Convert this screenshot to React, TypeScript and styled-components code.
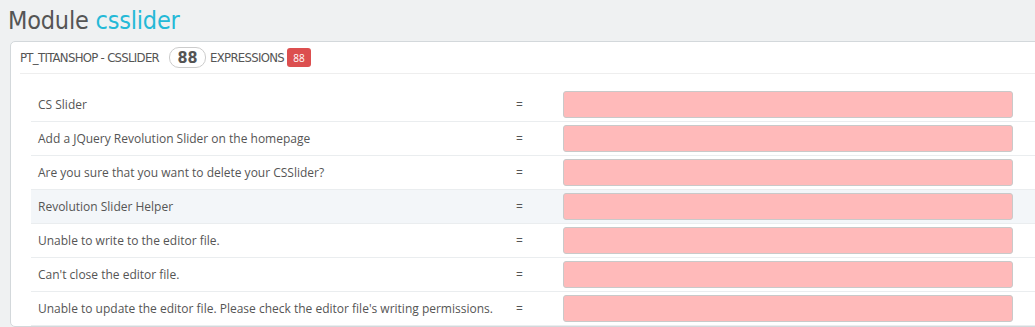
import React from "react";
import styled, { createGlobalStyle } from "styled-components";

const GlobalStyle = createGlobalStyle`
  html, body {
    margin: 0;
    padding: 0;
    background: #eff1f2;
    overflow: hidden;
  }
  body {
    font-family: "Open Sans", "Liberation Sans", sans-serif;
    color: #555;
  }
`;

const condensed = `"Liberation Sans Narrow", "DejaVu Sans Condensed", "Open Sans", sans-serif`;

const Page = styled.div`
  width: 1100px;
  padding: 7px 0 0 8px;
`;

const Title = styled.h2`
  margin: 0 0 6px 0;
  font-family: ${condensed};
  font-weight: normal;
  font-size: 25px;
  letter-spacing: -0.2px;
  line-height: 28px;
  color: #555;
`;

const ModuleName = styled.span`
  color: #25b9d7;
`;

const Panel = styled.div`
  margin-left: 2px;
  background: #fff;
  border: 1px solid #d3d8db;
  border-radius: 5px;
  padding: 0 0 0 9px;
`;

const PanelHeading = styled.div`
  display: flex;
  align-items: center;
  height: 31px;
  border-bottom: 1px solid #eee;
  font-family: ${condensed};
  font-size: 13px;
  letter-spacing: -0.7px;
  text-transform: uppercase;
  color: #555;
`;

const CountPill = styled.span`
  display: inline-flex;
  align-items: center;
  justify-content: center;
  width: 35px;
  height: 19px;
  margin: 0 4px 0 10px;
  border: 1px solid #ccc;
  border-radius: 10px;
  font-size: 16px;
  letter-spacing: 0;
  font-weight: bold;
  color: #555;
`;

const RedBadge = styled.span`
  display: inline-flex;
  align-items: center;
  justify-content: center;
  width: 24px;
  height: 19px;
  margin-left: 3px;
  border-radius: 3px;
  background: #dc4f4f;
  color: #fff;
  font-family: "Open Sans", sans-serif;
  font-size: 10px;
  letter-spacing: 0;
`;

const Table = styled.div`
  margin: 14px 0 0 11px;
`;

const Row = styled.div<{ $hover?: boolean }>`
  display: flex;
  align-items: center;
  height: 33px;
  border-bottom: 1px solid #eaedef;
  background: ${(p) => (p.$hover ? "#f3f6f9" : "#fff")};
  font-size: 12px;
`;

const Label = styled.div`
  width: 478px;
  padding-left: 7px;
`;

const Eq = styled.div`
  width: 40px;
`;

const Cell = styled.div`
  padding: 0 7px;
`;

const Field = styled.div`
  width: 448px;
  height: 25px;
  background: #ffbaba;
  border: 1px solid #c9c9c9;
  border-radius: 3px;
`;

const rows = [
  "CS Slider",
  "Add a JQuery Revolution Slider on the homepage",
  "Are you sure that you want to delete your CSSlider?",
  "Revolution Slider Helper",
  "Unable to write to the editor file.",
  "Can't close the editor file.",
  "Unable to update the editor file. Please check the editor file's writing permissions.",
];

export default function App() {
  return (
    <>
      <GlobalStyle />
      <Page>
        <Title>
          Module <ModuleName>csslider</ModuleName>
        </Title>
        <Panel>
          <PanelHeading>
            pt_titanshop - csslider
            <CountPill>88</CountPill>
            expressions
            <RedBadge>88</RedBadge>
          </PanelHeading>
          <Table>
            {rows.map((text, i) => (
              <Row key={i} $hover={i === 3}>
                <Label>{text}</Label>
                <Eq>=</Eq>
                <Cell>
                  <Field />
                </Cell>
              </Row>
            ))}
          </Table>
        </Panel>
      </Page>
    </>
  );
}
